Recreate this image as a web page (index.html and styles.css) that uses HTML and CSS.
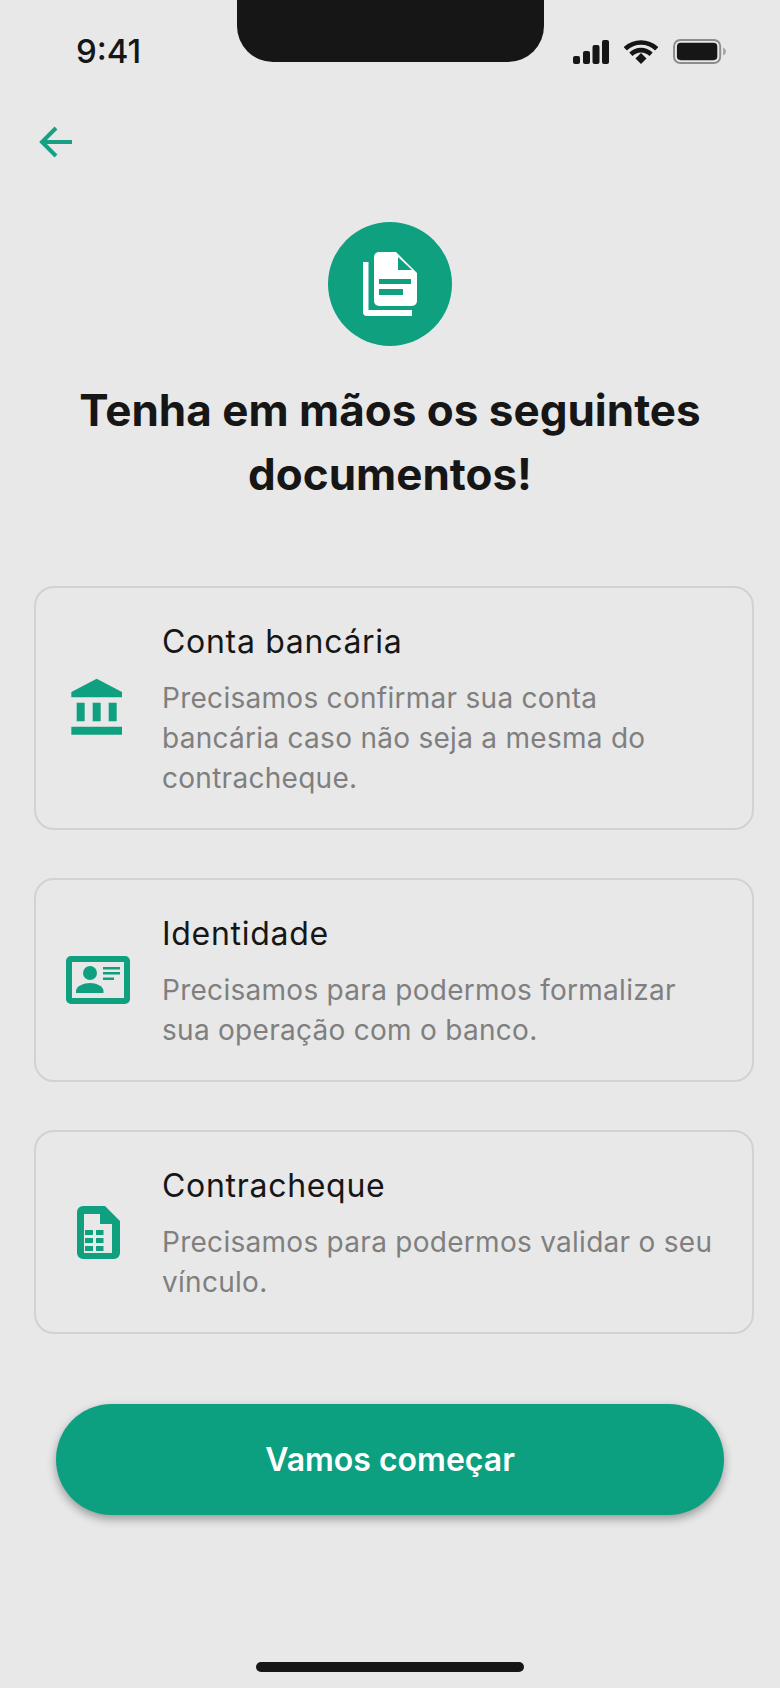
FILE: index.html
```html
<!DOCTYPE html>
<html lang="pt-BR">
<head>
    <meta charset="UTF-8">
    <meta name="viewport" content="width=device-width, initial-scale=1.0">
    <title>Documentos</title>
    <link rel="stylesheet" href="styles.css">
</head>
<body>
    <div id="screen">
        <div class="status-bar">
            <span class="time">9:41</span>
            <div class="notch"></div>
            <div class="status-icons">
                <svg width="36" height="24" viewBox="0 0 36 24"><rect x="0" y="16" width="7" height="8" rx="2"/><rect x="10" y="11" width="7" height="13" rx="2"/><rect x="19.500" y="5" width="7" height="19" rx="2"/><rect x="29" y="0" width="7" height="24" rx="2"/></svg>
                <svg width="34" height="24" viewBox="0 0 36 26"><path d="M1 9.500C10.500 .5 25.500 .5 35 9.500" class="wave"/><path d="M7 15.500C13.500 9.500 22.500 9.500 29 15.500" class="wave"/><path d="M12 20l6-6 6 6-6 6z"/></svg>
                <svg width="54" height="25" viewBox="0 0 56 26"><rect x="1" y="1" width="48" height="24" rx="6.500" class="battery-case"/><rect x="4" y="4" width="42" height="18" rx="4"/><path d="M52 9c2 .5 3 2 3 4s-1 3.500-3 4z" class="battery-cap"/></svg>
            </div>
        </div>

        <div class="back">
            <svg width="34" height="32" viewBox="0 0 34 32"><path d="M33 16H3M17 2L3 16l14 14"/></svg>
        </div>

        <div class="doc-badge">
            <svg width="54" height="64" viewBox="0 0 54 64"><path d="M0 10h5.500v48H49v6H4a4 4 0 0 1-4-4z"/><path d="M16 0h17l21 21v28a5 5 0 0 1-5 5H16a5 5 0 0 1-5-5V5a5 5 0 0 1 5-5z"/><path class="cut" d="M35 5v13h14z"/><rect class="cut" x="16" y="27" width="32" height="5"/><rect class="cut" x="16" y="37" width="24" height="6"/></svg>
        </div>

        <h1>Tenha em mãos os seguintes documentos!</h1>

        <ul class="doc-list">
            <li class="doc-card">
                <div class="doc-icon">
                    <svg width="64" height="64" viewBox="0 0 24 24"><path d="M4 10v7h3v-7H4zm6 0v7h3v-7h-3zM2 22h19v-3H2v3zm14-12v7h3v-7h-3zm-4.500-9L2 6v2h19V6l-9.500-5z"/></svg>
                </div>
                <div class="doc-text">
                    <strong>Conta bancária</strong>
                    <p>Precisamos confirmar sua conta bancária caso não seja a mesma do contracheque.</p>
                </div>
            </li>
            <li class="doc-card">
                <div class="doc-icon">
                    <svg width="64" height="48" viewBox="0 0 64 48"><path fill-rule="evenodd" d="M5 0h54a5 5 0 0 1 5 5v38a5 5 0 0 1-5 5H5a5 5 0 0 1-5-5V5a5 5 0 0 1 5-5zm1 6v36h52V6z"/><circle cx="24" cy="17" r="7"/><path d="M10 37v-2c0-5 8-8 14-8s13.500 3 13.500 8v2z"/><rect x="37" y="11" width="17" height="2.500"/><rect x="37" y="16" width="17" height="2.500"/><rect x="37" y="21.500" width="11" height="2.500"/></svg>
                </div>
                <div class="doc-text">
                    <strong>Identidade</strong>
                    <p>Precisamos para podermos formalizar sua operação com o banco.</p>
                </div>
            </li>
            <li class="doc-card">
                <div class="doc-icon">
                    <svg width="43" height="53" viewBox="0 0 43 53"><path fill-rule="evenodd" d="M6 0h22l15 15v32a6 6 0 0 1-6 6H6a6 6 0 0 1-6-6V6a6 6 0 0 1 6-6zm1 8v39h28V18H23V8z"/><rect x="8" y="24" width="8" height="5"/><rect x="19" y="24" width="7.500" height="5"/><rect x="8" y="32" width="8" height="5"/><rect x="19" y="32" width="7.500" height="5"/><rect x="8" y="40" width="8" height="5"/><rect x="19" y="40" width="7.500" height="5"/></svg>
                </div>
                <div class="doc-text">
                    <strong>Contracheque</strong>
                    <p>Precisamos para podermos validar o seu vínculo.</p>
                </div>
            </li>
        </ul>

        <button type="button" class="start-btn">Vamos começar</button>

        <div class="home-bar"></div>
    </div>
</body>
</html>
```
FILE: styles.css
```css
* {
    box-sizing: border-box;
}

body {
    margin: 0;
    background-color: #e8e8e8;
    font-family: Inter, 'Liberation Sans', sans-serif;
}

#screen {
    display: flex;
    flex-direction: column;
    height: 1688px;
    overflow: hidden;
}

.status-bar {
    display: grid;
    grid-template-columns: 161px 307px 1fr;
    align-items: start;
    height: 62px;
    padding: 0 53px 0 76px;
}

.time {
    margin-top: 32px;
    font-size: 33px;
    line-height: 38px;
    font-weight: 500;
    color: #161616;
}

.notch {
    height: 62px;
    background-color: #161616;
    border-radius: 0 0 36px 36px;
}

.status-icons {
    display: flex;
    justify-content: flex-end;
    align-items: flex-end;
    gap: 15px;
    margin-top: 38px;
    height: 26px;
}

.status-icons svg {
    fill: #161616;
}

.wave {
    fill: none;
    stroke: #161616;
    stroke-width: 5;
}

.battery-case {
    fill: none;
    stroke: #8c8c8c;
    stroke-width: 2;
}

.battery-cap {
    fill: #a5a5a5;
}

.back {
    margin: 64px 0 0 39px;
    height: 32px;
}

.back svg {
    display: block;
    fill: none;
    stroke: #17a084;
    stroke-width: 4;
}

.doc-badge {
    display: flex;
    justify-content: center;
    align-items: center;
    align-self: center;
    width: 124px;
    height: 124px;
    margin-top: 64px;
    background-color: #0fa080;
    border-radius: 50%;
}

.doc-badge svg {
    fill: #fff;
}

.doc-badge .cut {
    fill: #0fa080;
}

h1 {
    margin: 32px 70px 0;
    font-size: 44px;
    line-height: 64px;
    font-weight: 700;
    text-align: center;
    color: #161616;
}

.doc-list {
    display: flex;
    flex-direction: column;
    gap: 48px;
    list-style: none;
    margin: 80px 26px 0 34px;
    padding: 0;
}

.doc-card {
    display: flex;
    align-items: center;
    padding: 34px 36px 30px 30px;
    border: 2px solid #d2d2d2;
    border-radius: 20px;
}

.doc-icon {
    display: flex;
    justify-content: center;
    flex: none;
    width: 64px;
    margin: 0 32px 4px 0;
}

.doc-icon svg {
    fill: #0fa080;
}

.doc-text strong {
    display: block;
    font-size: 32px;
    line-height: 40px;
    font-weight: 400;
    letter-spacing: 0.7px;
    color: #161616;
}

.doc-text p {
    margin: 16px 0 0;
    font-size: 28px;
    line-height: 40px;
    letter-spacing: 0.28px;
    color: #7f7f7f;
}

.start-btn {
    align-self: flex-start;
    width: 668px;
    height: 111px;
    margin: 70px 0 0 56px;
    background-color: #0ca081;
    color: #fff;
    border: none;
    border-radius: 56px;
    font-family: inherit;
    font-size: 32px;
    font-weight: 600;
    box-shadow: 0 4px 10px rgba(0, 0, 0, 0.35);
}

.home-bar {
    align-self: center;
    width: 268px;
    height: 10px;
    margin-top: auto;
    margin-bottom: 16px;
    background-color: #161616;
    border-radius: 5px;
}
```
